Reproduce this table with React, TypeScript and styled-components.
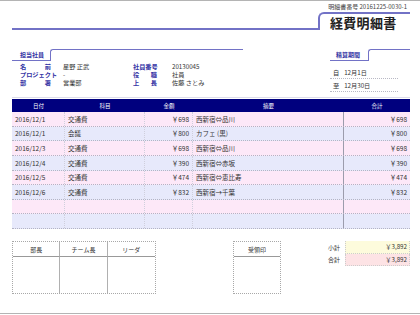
import styled, { createGlobalStyle } from "styled-components";

const GlobalStyle = createGlobalStyle`
  html, body { margin: 0; padding: 0; background: #fff; }
  body {
    font-family: "Noto Sans CJK JP", "Noto Sans", sans-serif;
    color: #333;
  }
`;

const RULE = "#7272c6";
const LABEL = "#3434a4";
const COLS = "53px 80px 48px 151px 66px";

type Entry = { date: string; item: string; amount: string; memo: string; total: string };

const entries: Entry[] = [
  { date: "2016/12/1", item: "交通費", amount: "￥698", memo: "西新宿⇔品川", total: "￥698" },
  { date: "2016/12/1", item: "会議", amount: "￥800", memo: "カフェ (黒)", total: "￥800" },
  { date: "2016/12/3", item: "交通費", amount: "￥698", memo: "西新宿⇔品川", total: "￥698" },
  { date: "2016/12/4", item: "交通費", amount: "￥390", memo: "西新宿⇔赤坂", total: "￥390" },
  { date: "2016/12/5", item: "交通費", amount: "￥474", memo: "西新宿⇔恵比寿", total: "￥474" },
  { date: "2016/12/6", item: "交通費", amount: "￥832", memo: "西新宿→千葉", total: "￥832" },
  { date: "", item: "", amount: "", memo: "", total: "" },
  { date: "", item: "", amount: "", memo: "", total: "" },
];

const App = () => {
  return (
    <>
      <GlobalStyle />
      <Sheet>
        <DocNo>明細書番号 20161225-0030-1</DocNo>
        <TitleRow>
          <TitleRule />
          <TitleBox>経費明細書</TitleBox>
        </TitleRow>

        <InfoSection>
          <EmployeeBlock>
            <SectionHead>
              <Tab>担当社員</Tab>
              <TabRule />
            </SectionHead>
            <InfoGrid>
              <Label>名 前</Label>
              <Value>星野 正武</Value>
              <Label $narrow>社員番号</Label>
              <Value>20130045</Value>
              <Label>プロジェクト</Label>
              <Value>-</Value>
              <Label $narrow>役 職</Label>
              <Value>社員</Value>
              <Label>部 署</Label>
              <Value>営業部</Value>
              <Label $narrow>上 長</Label>
              <Value>佐藤 さとみ</Value>
            </InfoGrid>
          </EmployeeBlock>

          <PeriodBlock>
            <SectionHead>
              <Tab $indent={6}>精算期間</Tab>
              <TabRule />
            </SectionHead>
            <PeriodList>
              <PeriodRow>
                <span>自</span>
                <span>12月1日</span>
              </PeriodRow>
              <PeriodRow>
                <span>至</span>
                <span>12月30日</span>
              </PeriodRow>
            </PeriodList>
          </PeriodBlock>
        </InfoSection>

        <Table>
          <HeadRow>
            <HeadCell>日付</HeadCell>
            <HeadCell>科目</HeadCell>
            <HeadCell>金額</HeadCell>
            <HeadCell>摘要</HeadCell>
            <HeadCell>合計</HeadCell>
          </HeadRow>
          {entries.map((e, i) => (
            <Row key={i} $tone={i % 2 === 0 ? "pink" : "blue"}>
              <Cell>{e.date}</Cell>
              <Cell>{e.item}</Cell>
              <Cell $right>{e.amount}</Cell>
              <Cell $strong>{e.memo}</Cell>
              <Cell $right $last>{e.total}</Cell>
            </Row>
          ))}
        </Table>

        <Footer>
          <StampBox $cols={3}>
            <StampHead>部長</StampHead>
            <StampHead>チーム長</StampHead>
            <StampHead $last>リーダ</StampHead>
            <StampSlot />
            <StampSlot />
            <StampSlot $last />
          </StampBox>

          <ReceiptBox $cols={1}>
            <StampHead $last>受領印</StampHead>
            <StampSlot $last />
          </ReceiptBox>

          <Totals>
            <TotalRow>
              <TotalLabel>小計</TotalLabel>
              <TotalValue $bg="#fdfbdc">￥3,892</TotalValue>
            </TotalRow>
            <TotalRow>
              <TotalLabel>合計</TotalLabel>
              <TotalValue $bg="#fde3e5">￥3,892</TotalValue>
            </TotalRow>
          </Totals>
        </Footer>
      </Sheet>
    </>
  );
};

export default App;

const Sheet = styled.div`
  width: 420px;
  height: 314px;
  box-sizing: border-box;
  border-top: 1px solid #b4b4b4;
  border-bottom: 1px solid #b4b4b4;
  padding: 0 10px 0 12px;
  overflow: hidden;
`;

const DocNo = styled.div`
  height: 11px;
  display: flex;
  align-items: center;
  justify-content: flex-end;
  padding-right: 3px;
  font-size: 6px;
  color: #444;
`;

const TitleRow = styled.div`
  display: flex;
  align-items: flex-start;
  height: 18px;
`;

const TitleRule = styled.div`
  flex: 1;
  height: 16px;
  border-bottom: 2px solid ${RULE};
`;

const TitleBox = styled.div`
  width: 92px;
  height: 18px;
  box-sizing: border-box;
  border-top: 2px solid ${RULE};
  border-left: 2px solid ${RULE};
  border-top-left-radius: 6px;
  padding: 1px 0 0 10px;
  display: flex;
  align-items: center;
  font-size: 13px;
  font-weight: 700;
  color: #222;
  letter-spacing: 0.3px;
`;

const InfoSection = styled.div`
  margin-top: 19px;
  height: 48px;
  border-bottom: 1px solid #dcdcea;
  display: flex;
  justify-content: space-between;
`;

const EmployeeBlock = styled.div`
  width: 231px;
`;

const PeriodBlock = styled.div`
  width: 80px;
`;

const SectionHead = styled.div`
  display: flex;
  height: 12px;
`;

const Tab = styled.div<{ $indent?: number }>`
  width: 38px;
  box-sizing: border-box;
  border-bottom: 1.5px solid ${RULE};
  padding-left: ${(p) => p.$indent ?? 8}px;
  display: flex;
  align-items: center;
  font-size: 6px;
  font-weight: 700;
  color: ${LABEL};
`;

const TabRule = styled.div`
  flex: 1;
  border-top: 1.5px solid ${RULE};
  border-left: 1.5px solid ${RULE};
  border-top-left-radius: 3px;
`;

const InfoGrid = styled.div`
  display: grid;
  grid-template-columns: 43px 70px 39px 1fr;
  grid-auto-rows: 8px;
  margin-top: 2px;
  padding-left: 8px;
  font-size: 6.2px;
  line-height: 8px;
`;

const Label = styled.div<{ $narrow?: boolean }>`
  width: ${(p) => (p.$narrow ? 24 : 31)}px;
  white-space: nowrap;
  text-align-last: justify;
  font-weight: 700;
  color: ${LABEL};
`;

const Value = styled.div`
  white-space: nowrap;
  color: #333;
`;

const PeriodList = styled.div`
  margin-top: 5px;
  width: 68px;
`;

const PeriodRow = styled.div`
  height: 13px;
  box-sizing: border-box;
  border-bottom: 1px dotted #b8b8c4;
  display: flex;
  align-items: center;
  gap: 5px;
  padding-left: 3px;
  font-size: 6.2px;
  color: #333;
`;

const Table = styled.div`
  margin-top: 1px;
`;

const HeadRow = styled.div`
  display: grid;
  grid-template-columns: ${COLS};
  height: 13px;
  background: #00007e;
`;

const HeadCell = styled.div`
  display: flex;
  align-items: center;
  justify-content: center;
  font-size: 5.5px;
  color: #fff;
`;

const Row = styled.div<{ $tone: "pink" | "blue" }>`
  display: grid;
  grid-template-columns: ${COLS};
  height: 14.625px;
  box-sizing: border-box;
  border-bottom: 1px dotted #b4b4c4;
  background: ${(p) => (p.$tone === "pink" ? "#fde8f8" : "#e7e9fb")};
`;

const Cell = styled.div<{ $right?: boolean; $strong?: boolean; $last?: boolean }>`
  display: flex;
  align-items: center;
  justify-content: ${(p) => (p.$right ? "flex-end" : "flex-start")};
  padding: 0 3px;
  font-size: 6.5px;
  color: #333;
  white-space: nowrap;
  border-right: ${(p) =>
    p.$last ? "none" : p.$strong ? "1px solid #9c9cac" : "1px dotted #cfcfdc"};
`;

const Footer = styled.div`
  margin-top: 12px;
  display: flex;
  align-items: flex-start;
`;

const StampBox = styled.div<{ $cols: number }>`
  width: ${(p) => p.$cols * 48}px;
  height: 53px;
  box-sizing: border-box;
  border: 1px dotted #a8a8a8;
  display: grid;
  grid-template-columns: repeat(${(p) => p.$cols}, 1fr);
  grid-template-rows: 15px 1fr;
`;

const ReceiptBox = styled(StampBox)`
  margin-left: 77px;
`;

const StampHead = styled.div<{ $last?: boolean }>`
  display: flex;
  align-items: center;
  justify-content: center;
  font-size: 6px;
  color: #333;
  border-bottom: 1px solid #999;
  border-right: ${(p) => (p.$last ? "none" : "1px solid #b0b0b0")};
`;

const StampSlot = styled.div<{ $last?: boolean }>`
  border-right: ${(p) => (p.$last ? "none" : "1px solid #b0b0b0")};
`;

const Totals = styled.div`
  margin-left: auto;
  width: 82px;
`;

const TotalRow = styled.div`
  display: flex;
  align-items: stretch;
  height: 12.5px;
`;

const TotalLabel = styled.div`
  width: 17px;
  display: flex;
  align-items: center;
  font-size: 6px;
  color: #333;
`;

const TotalValue = styled.div<{ $bg: string }>`
  flex: 1;
  display: flex;
  align-items: center;
  justify-content: flex-end;
  padding-right: 2px;
  font-size: 6.2px;
  color: #333;
  background: ${(p) => p.$bg};
  border: 1px dotted #cdcdcd;
  border-top-width: 0;
`;
